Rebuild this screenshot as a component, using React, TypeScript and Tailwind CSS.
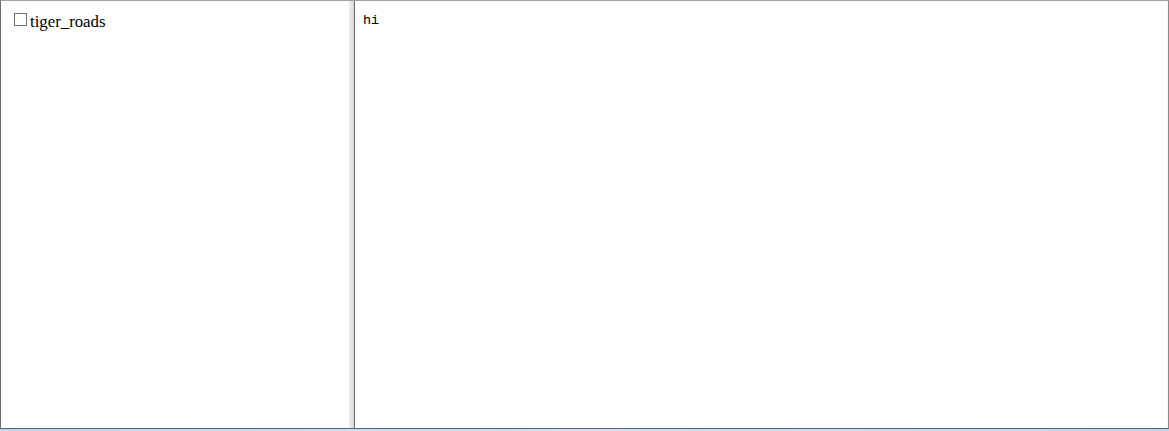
export default function App() {
  return (
    <div className="w-[1169px] h-[431px] flex flex-col bg-white overflow-hidden">
      <div className="flex flex-1 min-h-0 border-t border-t-[#a0a0a0] border-l border-l-[#6e6e6e] border-r border-r-[#8a8a8a] border-b border-b-[#5a6070]">
        <div className="w-[348px] bg-white pl-[13px] pt-[11px]">
          <label className="flex items-start gap-[3px] text-[16.8px] leading-[19px] text-black" style={{ fontFamily: '"Liberation Serif", serif' }}>
            <span className="mt-[1px] w-[13px] h-[13px] border border-[#707070] bg-white inline-block shrink-0"></span>
            <span>tiger_roads</span>
          </label>
        </div>
        <div className="w-[5px] bg-gradient-to-r from-[#f0f0f0] via-[#e4e4e4] to-[#d8d8d8]"></div>
        <div className="w-[1px] bg-[#6a6a6a]"></div>
        <div className="flex-1 bg-white pl-[8px] pt-[12px]">
          <div className="text-[13.5px] leading-[16px] text-black" style={{ fontFamily: '"Liberation Mono", monospace' }}>hi</div>
        </div>
        <div className="w-[1px] bg-[#f4f4f4]"></div>
      </div>
      <div className="h-[2px] bg-gradient-to-r from-[#c4d4ea] via-[#d6e2f2] to-[#c4d4ea]"></div>
    </div>
  );
}
